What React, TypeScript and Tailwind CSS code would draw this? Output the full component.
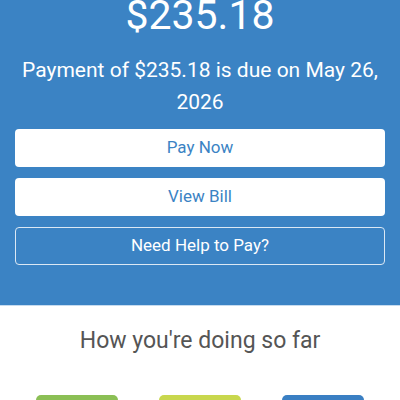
import * as React from "react"

const tiles = [
  { label: "good", color: "bg-[#8bbf55]" },
  { label: "ok", color: "bg-[#c8d74d]" },
  { label: "now", color: "bg-[#3a7fc3]" },
]

export default function App() {
  return (
    <div className="h-[400px] w-[400px] overflow-hidden bg-white font-['Roboto',sans-serif]">
      <div className="flex flex-col bg-[#3b83c4] px-[15px] pb-[40px] border-b border-[#c6dbef]">
        <div className="-mt-[9px] text-center text-[41px] leading-[48px] text-white">$235.18</div>
        <p className="mt-[15px] text-center text-[21px] leading-[32px] text-white">
          Payment of $235.18 is due on May 26, 2026
        </p>
        <div className="mt-[11px] flex flex-col gap-[11px]">
          <button className="h-[38px] rounded-[4px] bg-white text-[17px] text-[#3b83c4]">Pay Now</button>
          <button className="h-[38px] rounded-[4px] bg-white text-[17px] text-[#3b83c4]">View Bill</button>
          <button className="h-[38px] rounded-[4px] border border-[#dbe8f4] text-[17px] text-white">
            Need Help to Pay?
          </button>
        </div>
      </div>

      <div className="px-[15px]">
        <h2 className="mt-[19px] text-center text-[23px] leading-[32px] text-[#555555]">How you're doing so far</h2>
        <div className="mt-[38px] grid grid-cols-3">
          {tiles.map((t) => (
            <div key={t.label} className="flex justify-center">
              <div className={`h-[40px] w-[82px] rounded-t-[5px] ${t.color}`} />
            </div>
          ))}
        </div>
      </div>
    </div>
  )
}
